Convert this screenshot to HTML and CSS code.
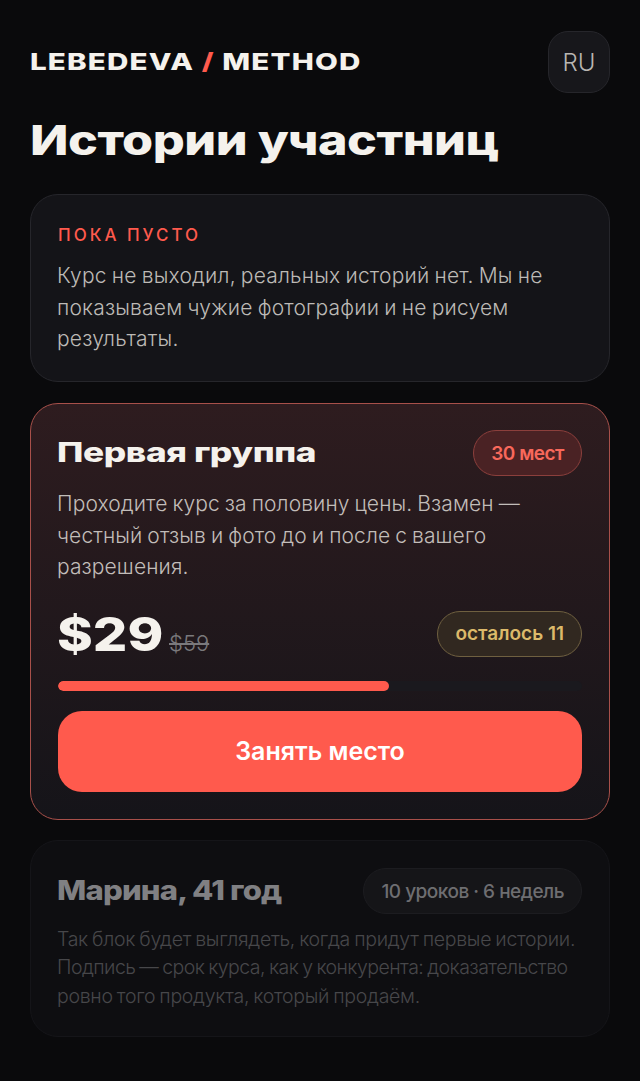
FILE: index.html
```html
<!DOCTYPE html>
<html lang="ru">
<head>
<meta charset="utf-8">
<title>Истории участниц</title>
<link rel="stylesheet" href="styles.css">
</head>
<body>
<main class="page">
  <header class="top">
    <div class="logo"><span class="wide">LEBEDEVA <span class="slash">/</span> METHOD</span></div>
    <button class="lang">RU</button>
  </header>
  <h1 class="title"><span class="wide">Истории участниц</span></h1>
  <section class="card empty">
    <div class="eyebrow">ПОКА ПУСТО</div>
    <p class="text">Курс не выходил, реальных историй нет. Мы не показываем чужие фотографии и не рисуем результаты.</p>
  </section>
  <section class="card offer">
    <div class="row">
      <h2 class="name"><span class="wide">Первая группа</span></h2>
      <span class="pill pill-red">30 мест</span>
    </div>
    <p class="text offer-text">Проходите курс за половину цены. Взамен — честный отзыв и фото до и после с вашего разрешения.</p>
    <div class="row price-row">
      <div class="prices"><span class="price"><span class="wide">$29</span></span><s class="old">$59</s></div>
      <span class="pill pill-gold">осталось 11</span>
    </div>
    <div class="bar"><div class="fill"></div></div>
    <button class="cta">Занять место</button>
  </section>
  <section class="card sample">
    <div class="row">
      <h2 class="name name-dim"><span class="wide">Марина, 41 год</span></h2>
      <span class="pill pill-dim">10 уроков · 6 недель</span>
    </div>
    <p class="text sample-text">Так блок будет выглядеть, когда придут первые истории.<br><span class="tight">Подпись — срок курса, как у конкурента: доказательство</span><br><span class="tighter">ровно того продукта, который продаём.</span></p>
  </section>
</main>
</body>
</html>
```
FILE: styles.css
```css
* { box-sizing: border-box; }
html, body { margin: 0; height: 100%; }
body {
  background: #0a0a0c;
  color: #f5f2ed;
  font-family: "Inter", "Liberation Sans", sans-serif;
  overflow: hidden;
}
.page { display: flex; flex-direction: column; padding: 31px 30px 0; }
.top { display: flex; justify-content: space-between; align-items: center; height: 62px; }
.wide { display: inline-block; transform-origin: left center; transform: scaleX(1.15); white-space: nowrap; }
.logo {
  font-weight: 800;
  font-size: 23px;
  letter-spacing: 0.9px;
  white-space: nowrap;
}
.logo .wide { transform: scaleX(1.285); }
.slash { color: #ff5a4d; }
.lang {
  width: 62px; height: 62px; padding: 0;
  border-radius: 20px;
  border: 1px solid #26262b;
  background: #17171b;
  color: #b9b6b2;
  font: 300 24px "Inter", sans-serif;
}
.title {
  margin: 21px 0 28px;
  font-weight: 800;
  font-size: 41px;
  letter-spacing: -0.4px;
  line-height: 52px;
  white-space: nowrap;
}
.title .wide { transform: scaleX(1.226); }
.card { border-radius: 28px; padding: 28px 27px; border: 1px solid #26262b; background: #141418; }
.empty { height: 188px; margin-bottom: 21px; padding-top: 29px; }
.eyebrow { color: #ff5a4d; font-weight: 500; font-size: 17px; letter-spacing: 3px; line-height: 22px; margin-bottom: 14px; }
.text { margin: 0 0 0 -1px; font-size: 21px; font-weight: 300; line-height: 31.5px; color: #bdbab6; word-spacing: -1px; letter-spacing: .19px; }
.offer {
  height: 417px; margin-bottom: 20px; padding-top: 26px;
  border-color: #a8504a;
  background: linear-gradient(180deg, #2e1c1f 0%, #151419 100%);
}
.row { display: flex; justify-content: space-between; align-items: center; }
.name { margin: 0 0 0 -1px; font-weight: 800; font-size: 27px; letter-spacing: -0.3px; line-height: 46px; white-space: nowrap; }
.name .wide { transform: scaleX(1.305); }
.name-dim { color: #808083; letter-spacing: -0.7px; }
.name-dim .wide { transform: scaleX(1.15); }
.pill { height: 46px; display: inline-flex; align-items: center; padding: 0 17px; border-radius: 23px; font-size: 19px; font-weight: 600; white-space: nowrap; border: 1px solid; }
.pill-red { color: #f8685b; background: #4a2224; border-color: #8c3f3c; letter-spacing: -.5px; }
.pill-gold { color: #dcb96a; background: #312820; border-color: #6f6040; }
.pill-dim { color: #6e6e71; background: #151518; border-color: #1c1c20; letter-spacing: -.5px; font-weight: 500; }
.offer-text { margin-top: 12px; color: #c2bdb9; letter-spacing: .1px; }
.price-row { margin-top: 26px; }
.prices { display: flex; align-items: baseline; gap: 0; }
.price { font-weight: 800; font-size: 46px; line-height: 50px; width: 112px; margin-left: -1px; }
.price .wide { transform: scaleX(1.18); }
.old { color: #7a797c; font-size: 22px; font-weight: 300; }
.bar { height: 10px; margin-top: 22px; border-radius: 5px; background: #1a191e; overflow: hidden; }
.fill { width: 63.2%; height: 100%; border-radius: 5px; background: #ff5a4d; }
.cta {
  display: block; width: 100%; height: 81px; margin-top: 20px;
  border: 0; border-radius: 24px; background: #ff5a4d; color: #fff;
  font: 600 25px "Inter", sans-serif;
}
.sample { height: 197px; padding-top: 27px; border-color: #151519; background: #0e0e11; }
.sample-text { margin-top: 11px; font-size: 19.5px; line-height: 28.3px; color: #47474a; letter-spacing: -.3px; white-space: nowrap; }
.tight { letter-spacing: -.55px; }
.tighter { letter-spacing: -.3px; }
```
